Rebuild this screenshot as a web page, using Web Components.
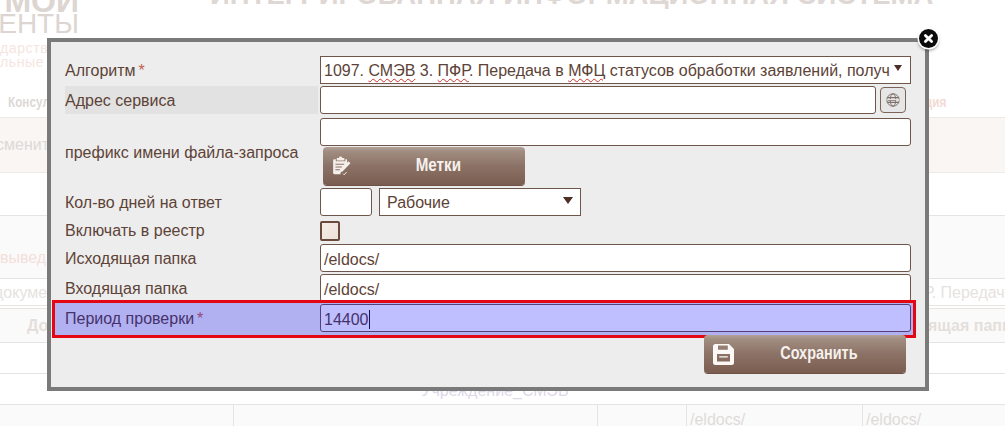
<!DOCTYPE html>
<html lang="ru">
<head>
<meta charset="utf-8">
<title>Форма</title>
<style>
html,body{margin:0;padding:0;height:426px;overflow:hidden;background:#fff;font-family:"Liberation Sans",Arial,sans-serif;}
</style>
</head>
<body>
<bg-page></bg-page>
<modal-dialog>
  <form-row><span slot="label">Алгоритм<req-star></req-star></span>
    <select-box full><span class="t">1097. <spell-err>СМЭВ</spell-err> 3. <spell-err>ПФР</spell-err>. Передача в <spell-err>МФЦ</spell-err> статусов обработки заявлений, получ</span></select-box>
  </form-row>
  <form-row gap="2" shaded><span slot="label">Адрес сервиса</span>
    <field-group><text-field grow></text-field><globe-button></globe-button></field-group>
  </form-row>
  <form-row gap="4"><span slot="label">префикс имени файла-запроса</span>
    <field-stack>
      <text-field></text-field>
      <brown-button icon="clip" squeeze>Метки</brown-button>
    </field-stack>
  </form-row>
  <form-row gap="3"><span slot="label">Кол-во дней на ответ</span>
    <field-group spaced><text-field small></text-field><select-box wide>Рабочие</select-box></field-group>
  </form-row>
  <form-row gap="5" check><span slot="label">Включать в реестр</span><check-box></check-box></form-row>
  <form-row gap="3"><span slot="label">Исходящая папка</span><text-field>/eldocs/</text-field></form-row>
  <form-row gap="2"><span slot="label">Входящая папка</span><text-field>/eldocs/</text-field></form-row>
  <form-row gap="2" highlight><span slot="label">Период проверки<req-star></req-star></span><text-field caret>14400</text-field></form-row>
  <save-bar><brown-button icon="save">Сохранить</brown-button></save-bar>
</modal-dialog>

<script>
function def(name, css, html, extra){
  class C extends HTMLElement{
    constructor(){super();const r=this.attachShadow({mode:"open"});r.innerHTML="<style>"+css+"</style>"+html;}
    connectedCallback(){if(extra)extra(this);}
  }
  customElements.define(name,C);
}
const INK="#5d4337";

def("bg-page",`
:host{display:block;width:1005px;height:426px;overflow:hidden;font-family:"Liberation Sans",Arial,sans-serif;}
.head{height:88px;display:flex;position:relative;overflow:hidden;}
.logo{width:79px;flex:none;height:88px;overflow:hidden;color:#ddd5d1;position:relative;}
.logo .a{font:bold 32px/24px "Liberation Sans",sans-serif;height:13px;display:flex;align-items:flex-end;justify-content:flex-end;overflow:hidden;}
.logo .b{font:28px/22px "Liberation Sans",sans-serif;height:22px;white-space:nowrap;display:flex;justify-content:flex-end;}
.logo .c{font:14px/14px "Liberation Sans",sans-serif;color:#f5e5e2;text-align:left;white-space:nowrap;letter-spacing:.6px;}
.logo .c.f{margin-top:6px;}
.title{flex:1;height:88px;overflow:hidden;color:#ded7d3;text-align:center;position:relative;}
.title .l1{font:bold 27.5px/28px "Liberation Sans",sans-serif;height:9px;display:flex;align-items:flex-end;overflow:hidden;white-space:nowrap;padding-left:131px;}
.title .l2{font:bold 24px/24px "Liberation Sans",sans-serif;margin-top:26px;white-space:nowrap;color:#e8e3e0;padding-left:16px;}
.nav{height:30px;box-sizing:border-box;border-bottom:1px solid #efe8e4;display:flex;justify-content:space-between;font:bold 14px/28px "Liberation Sans",sans-serif;color:#ddd8d5;padding:0 59px 0 8px;}
.nav span{display:inline-block;transform:scaleX(.84);transform-origin:left;}
.nav i{display:inline-block;font-style:normal;color:#f4d9d4;transform:scaleX(.84);transform-origin:right;}
.band{height:55px;box-sizing:border-box;background:#faf6f3;border-bottom:1px solid #eeeae8;font-size:16px;line-height:54px;color:#ddd9d7;white-space:nowrap;overflow:hidden;}
.band span{margin-left:-4px;}
.gap1{height:43px;box-sizing:border-box;border-bottom:1px solid #e6e3e1;}
.zone{height:63px;box-sizing:border-box;background:#fbfafa;border-bottom:1px solid #e6e3e1;font-size:16px;color:#f3dfdc;line-height:18px;padding-top:33px;}
.row1{height:27px;box-sizing:border-box;border-bottom:1px solid #e6e3e1;font-size:16px;line-height:27px;color:#e6e2e0;display:flex;white-space:nowrap;overflow:hidden;}
.row1 span:first-child{flex:0 0 927px;margin-left:-6px;}
.row1 span:last-child{flex:none;margin-left:3px;}
.th{margin-top:2px;height:35px;box-sizing:border-box;border-top:1px solid #e6e3e1;border-bottom:1px solid #e6e3e1;background:#fbfafa;font:bold 16px/34px "Liberation Sans",sans-serif;color:#e4dfdc;display:flex;padding-left:27px;white-space:nowrap;overflow:hidden;}
.th span:first-child{flex:0 0 901px;}
.th span:last-child{flex:none;}
.r{height:31px;box-sizing:border-box;border-bottom:1px solid #e6e3e1;}
.r.last{position:relative;overflow:visible;font-size:16px;line-height:34px;text-align:center;color:#ded8e8;padding-right:15px;}
.cols{display:grid;grid-template-columns:234px 364px 89px 176px 1fr;height:21px;background:#fbfafa;font-size:16px;color:#dedbd9;line-height:30px;overflow:hidden;}
.cols div{border-right:1px solid #e6e3e1;padding-left:3px;overflow:hidden;}
.cols div:last-child{border:0;}
`,`
<div class="head">
  <div class="logo"><div class="a">МОЙ</div><div class="b">ЕНТЫ</div><div class="c f">дарстве</div><div class="c">льные у</div></div>
  <div class="title"><div class="l1">ИНТЕГРИРОВАННАЯ ИНФОРМАЦИОННАЯ СИСТЕМА</div><div class="l2">МОИ ДОКУМЕНТЫ</div></div>
</div>
<div class="nav"><span>Консул</span><i>ция</i></div>
<div class="band"><span>сменит</span></div>
<div class="gap1"></div>
<div class="zone">вывед</div>
<div class="row1"><span>докуме</span><span>Р. Передача</span></div>
<div class="th"><span>До</span><span>ящая папка</span></div>
<div class="r"></div>
<div class="r last">Учреждение_СМЭВ</div>
<div class="cols"><div></div><div></div><div></div><div>/eldocs/</div><div>/eldocs/</div></div>
`);

def("modal-dialog",`
:host{display:block;position:absolute;left:47px;top:38px;width:882px;height:353px;box-sizing:border-box;border:4px solid #7a7a7a;background:#ededed;padding:14px 14px 0;color:${INK};font-family:"Liberation Sans",Arial,sans-serif;font-size:16px;}
.x{position:absolute;right:-13px;top:-13px;width:19px;height:19px;border-radius:50%;background:#0c0c0c;box-shadow:0 0 0 1.5px #fff,0 2px 3px 1px rgba(0,0,0,.35);display:flex;align-items:center;justify-content:center;}
svg{display:block;}
`,`
<slot></slot>
<div class="x" role="button" aria-label="Закрыть"><svg width="11" height="11" viewBox="0 0 11 11"><path d="M2.4 2.4l6.2 6.2M8.6 2.4L2.4 8.6" stroke="#fff" stroke-width="2.8" stroke-linecap="round"/></svg></div>
`);

def("form-row",`
:host{display:grid;grid-template-columns:255px 1fr;position:relative;line-height:18px;}
.lab{display:flex;align-items:center;width:253px;box-sizing:border-box;padding-top:2px;}
:host([check]) .lab{padding-top:0;}
:host([shaded]) .lab{background:#e2e2e2;}
:host([highlight])::after{content:"";position:absolute;left:-13px;right:-5px;top:-4px;bottom:-6px;border:3px solid #e40613;background:rgba(0,0,255,.25);pointer-events:none;}
`,`<div class="lab"><slot name="label"></slot></div><div class="val"><slot></slot></div>`,
el=>{const g=el.getAttribute("gap");if(g)el.style.marginTop=g+"px";});

def("req-star",`:host{display:inline;color:#c4604e;margin-left:3px;}`,`*`);
def("spell-err",`:host{display:inline;text-decoration:underline wavy #d0312d 1px;text-underline-offset:2px;}`,`<slot></slot>`);

def("text-field",`
:host{display:block;height:28px;box-sizing:border-box;border:1px solid #6f564b;border-radius:3px;background:#fff;color:${INK};font-size:16px;line-height:29px;padding-left:3px;white-space:nowrap;overflow:hidden;}
:host([grow]){flex:1;width:auto;}
:host([small]){width:52px;flex:none;}
.c{display:none;width:1px;height:19px;background:#1b1b1b;vertical-align:-4px;}
:host([caret]) .c{display:inline-block;}
`,`<slot></slot><span class="c"></span>`);

def("select-box",`
:host{display:flex;align-items:center;height:28px;box-sizing:border-box;border:1px solid #6f564b;background:#fff;color:${INK};font-size:16px;line-height:26px;white-space:nowrap;overflow:hidden;position:relative;}
:host([full]){padding-left:3px;}
:host([wide]){width:202px;padding-left:7px;flex:none;}
.txt{flex:1;overflow:hidden;padding-top:2px;}
.a{flex:none;width:0;height:0;border-left:4px solid transparent;border-right:4px solid transparent;border-top:6px solid #4d2f26;margin:-5px 8px 0 4px;}
:host([wide]) .a{border-left-width:5px;border-right-width:5px;border-top-width:7px;margin:-3px 7px 0 4px;}
`,`<div class="txt"><slot></slot></div><div class="a"></div>`);

def("field-group",`:host{display:flex;gap:4px;align-items:flex-start;}:host([spaced]){gap:7px;}`,`<slot></slot>`);
def("field-stack",`:host{display:flex;flex-direction:column;gap:1px;}::slotted(brown-button){margin-left:3px;}`,`<slot></slot>`);

def("globe-button",`
:host{display:flex;flex:none;width:26px;height:26px;margin:1px 5px 0 0;box-sizing:border-box;border:1px solid #7d645a;border-radius:4px;background:#e6e6e6;align-items:center;justify-content:center;}
svg{display:block;}
`,`<svg width="14" height="14" viewBox="0 0 14 14" fill="none" stroke="#7f726c" stroke-width="1"><circle cx="7" cy="7" r="6.2"/><ellipse cx="7" cy="7" rx="2.8" ry="6.2"/><path d="M1.2 4.6h11.6M1.2 9.4h11.6" stroke-width="1.1"/><path d="M0.6 7h12.8" stroke="#e6e6e6" stroke-width="1.6"/><path d="M1.5 7l.7 1 .7-1 .7 1 .7-1 .7 1 .7-1 .7 1 .7-1 .7 1 .7-1 .7 1 .7-1" stroke-width=".7"/></svg>`);

def("check-box",`:host{display:block;width:20px;height:20px;box-sizing:border-box;border:2px solid #6a4a3d;border-radius:2px;background:linear-gradient(135deg,#f4ece6,#eee2da);}`,``);

const ICONS={
clip:`<svg width="19" height="20" viewBox="0 0 20 21"><path fill="#f4efeb" fill-rule="evenodd" d="M5 2h2.1a2 2 0 0 1 3.8 0H13v2.6H5zM1.2 3.4H4v2.2h10V3.4h1.8v5.4L9.6 15.5l-.8 3.6H2.4a1.2 1.2 0 0 1-1.2-1.2V4.6a1.2 1.2 0 0 1 1.2-1.2zM3.6 8v1.3h9.2V8zm0 2.9v1.3h6.8v-1.3zm0 2.9v1.3h4.6v-1.3z"/><path fill="#f4efeb" d="M17.2 5.6l2.2 2-8.3 8.8-3 1 .9-3z"/><path fill="none" stroke="#f4efeb" stroke-width="1" d="M11.6 18.6l1.2 1.2 2.6-3"/></svg>`,
save:`<svg width="21" height="21" viewBox="0 0 21 21"><path fill="#fbf8f6" fill-rule="evenodd" d="M2.5 0H16l5 5v13.5a2.5 2.5 0 0 1-2.5 2.5h-16A2.5 2.5 0 0 1 0 18.5v-16A2.5 2.5 0 0 1 2.5 0zM5 1.6v4.2h9.8V1.6zM4 10v7.6h13V10zm2.2 2.2h8.6v1.3H6.2z"/></svg>`};
def("brown-button",`
:host{display:flex;align-items:center;width:202px;height:38px;box-sizing:border-box;border-radius:4px;background:linear-gradient(#b3a297 0,#a08c80 12%,#8c7266 50%,#7a5d50 100%);box-shadow:0 1px 0 #6d5145;color:#f6f1ed;font:bold 19px/36px "Liberation Sans",sans-serif;position:relative;padding-left:9px;}
.ic{flex:none;width:21px;display:flex;}
.tx{flex:1;text-align:center;padding:0 2px 2px 0;}
.sq{display:inline-block;transform:scaleX(.76);}
:host([squeeze]) .sq{transform:scaleX(.8);}
`,`<span class="ic"></span><span class="tx"><span class="sq"><slot></slot></span></span>`,
el=>{el.shadowRoot.querySelector(".ic").innerHTML=ICONS[el.getAttribute("icon")]||"";});

def("save-bar",`:host{display:flex;justify-content:flex-end;padding-right:5px;margin-top:3px;}`,`<slot></slot>`);
</script>
</body>
</html>
